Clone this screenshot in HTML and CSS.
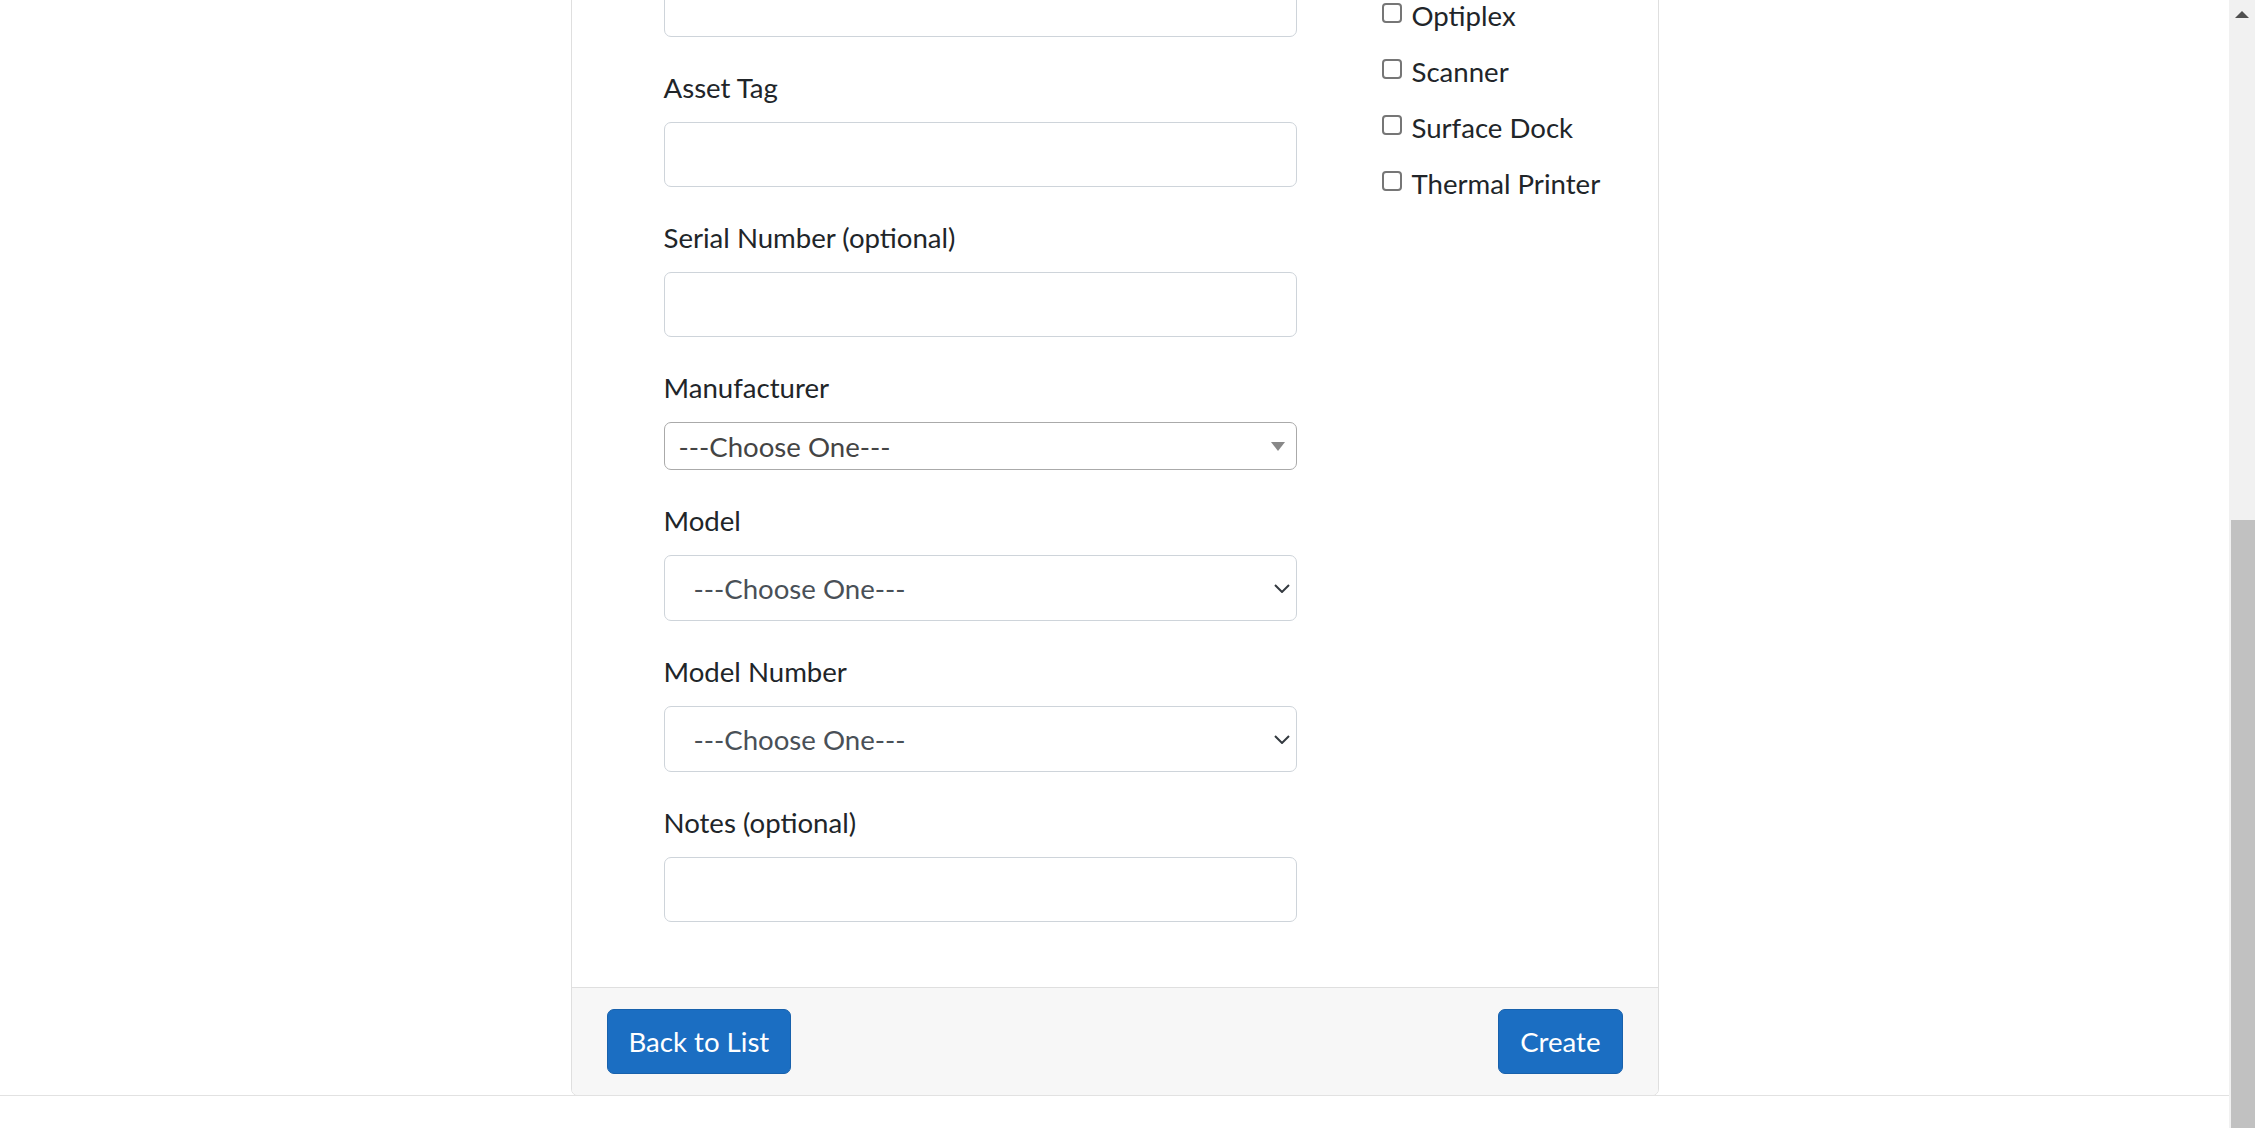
FILE: index.html
```html
<!DOCTYPE html>
<html lang="en">
<head>
<meta charset="utf-8">
<title>Create Asset</title>
<link rel="stylesheet" href="styles.css">
</head>
<body>
<div class="screen">
  <div class="page">
    <main class="container">
      <form class="card">
        <div class="card-body">
          <div class="form-cols">
            <div class="col-main">
              <div class="form-group">
                <input class="form-control" type="text">
              </div>
              <div class="form-group">
                <label class="form-label">Asset Tag</label>
                <input class="form-control" type="text">
              </div>
              <div class="form-group">
                <label class="form-label">Serial Number (optional)</label>
                <input class="form-control" type="text">
              </div>
              <div class="form-group">
                <label class="form-label">Manufacturer</label>
                <span class="s2">
                  <span class="s2-text">---Choose One---</span>
                  <span class="s2-arrow"></span>
                </span>
              </div>
              <div class="form-group">
                <label class="form-label">Model</label>
                <div class="select-wrap">
                  <select class="form-select"><option>---Choose One---</option></select>
                  <svg class="chev" width="16" height="9" viewBox="0 0 16 9"><path d="M1 1 L8 8 L15 1" fill="none" stroke="#343a40" stroke-width="2"/></svg>
                </div>
              </div>
              <div class="form-group">
                <label class="form-label">Model Number</label>
                <div class="select-wrap">
                  <select class="form-select"><option>---Choose One---</option></select>
                  <svg class="chev" width="16" height="9" viewBox="0 0 16 9"><path d="M1 1 L8 8 L15 1" fill="none" stroke="#343a40" stroke-width="2"/></svg>
                </div>
              </div>
              <div class="form-group">
                <label class="form-label">Notes (optional)</label>
                <input class="form-control" type="text">
              </div>
            </div>
            <div class="col-side">
              <label class="check"><input class="check-input" type="checkbox"><span>Optiplex</span></label>
              <label class="check"><input class="check-input" type="checkbox"><span>Scanner</span></label>
              <label class="check"><input class="check-input" type="checkbox"><span>Surface Dock</span></label>
              <label class="check"><input class="check-input" type="checkbox"><span>Thermal Printer</span></label>
            </div>
          </div>
        </div>
        <div class="card-footer">
          <a class="btn" href="#">Back to List</a>
          <button class="btn" type="button">Create</button>
        </div>
      </form>
    </main>
    <footer class="site-footer"></footer>
  </div>
  <div class="scrollbar">
    <div class="sb-up"><span class="sb-arrow"></span></div>
    <div class="sb-thumb"></div>
  </div>
</div>
</body>
</html>
```

FILE: styles.css
```css
html, body {
  margin: 0;
  height: 100%;
  overflow: hidden;
}

body {
  font-family: Lato, "Open Sans", "Liberation Sans", sans-serif;
  font-size: 27.6px;
  color: #212529;
  background: #fff;
}

.screen {
  display: flex;
  height: 100vh;
}

.page {
  flex: 1;
  min-width: 0;
}

.container {
  width: 1088px;
  margin: 0 auto;
}

.card {
  display: block;
  margin: -64px 0 -1px;
  border: 1px solid #dfdfdf;
  border-radius: 7px;
  background: #fff;
}

.card-body {
  padding: 35px;
}

.form-cols {
  display: flex;
  align-items: flex-start;
}

.col-main {
  margin-left: 57px;
  width: 633px;
}

.col-side {
  margin-left: 85px;
  padding-top: 23px;
  display: flex;
  flex-direction: column;
}

.form-group {
  margin-bottom: 30px;
}

.form-label {
  display: block;
  line-height: 41px;
  margin-bottom: 14px;
}

.form-control {
  display: block;
  box-sizing: border-box;
  width: 100%;
  height: 65px;
  margin: 0;
  padding: 0 21px;
  border: 1px solid #ced4da;
  border-radius: 7px;
  background: #fff;
  font: inherit;
  color: #495057;
}

.s2 {
  display: flex;
  align-items: center;
  justify-content: space-between;
  box-sizing: border-box;
  height: 48px;
  padding: 0 11px 0 14px;
  border: 1px solid #aaa;
  border-radius: 7px;
  background: #fff;
  color: #444;
}

.s2-arrow {
  width: 0;
  height: 0;
  border-top: 9px solid #888;
  border-left: 7px solid transparent;
  border-right: 7px solid transparent;
}

.select-wrap {
  position: relative;
}

.form-select {
  display: block;
  box-sizing: border-box;
  width: 100%;
  height: 66px;
  margin: 0;
  padding: 0 40px 0 29px;
  border: 1px solid #ced4da;
  border-radius: 7px;
  background: #fff;
  font: inherit;
  color: #495057;
  appearance: none;
  -webkit-appearance: none;
}

.chev {
  position: absolute;
  right: 7px;
  top: 29px;
}

.check {
  display: flex;
  align-items: flex-start;
  line-height: 41px;
  margin-bottom: 15px;
}

.check-input {
  appearance: none;
  -webkit-appearance: none;
  box-sizing: border-box;
  width: 20px;
  height: 20px;
  margin: 8px 10px 0 0;
  border: 2px solid #767676;
  border-radius: 4px;
  background: #fff;
}

.card-footer {
  display: flex;
  justify-content: space-between;
  padding: 21px 35px;
  background: #f7f7f7;
  border-top: 1px solid #dfdfdf;
  border-radius: 0 0 6px 6px;
}

.btn {
  display: inline-flex;
  align-items: center;
  box-sizing: border-box;
  height: 65px;
  padding: 0 21px;
  border: 1px solid #1861ac;
  border-radius: 7px;
  background: #1b6ec2;
  color: #fff;
  font: inherit;
  text-decoration: none;
}

.site-footer {
  height: 40px;
  border-top: 1px solid #e2e2e2;
}

.scrollbar {
  width: 26px;
  background: #f1f1f1;
  display: flex;
  flex-direction: column;
  align-items: flex-end;
}

.sb-up {
  align-self: stretch;
  height: 520px;
  display: flex;
  justify-content: center;
}

.sb-arrow {
  width: 0;
  height: 0;
  margin-top: 11px;
  border-bottom: 7px solid #505050;
  border-left: 7px solid transparent;
  border-right: 7px solid transparent;
}

.sb-thumb {
  flex: 1;
  width: 24px;
  background: #c1c1c1;
}
```
